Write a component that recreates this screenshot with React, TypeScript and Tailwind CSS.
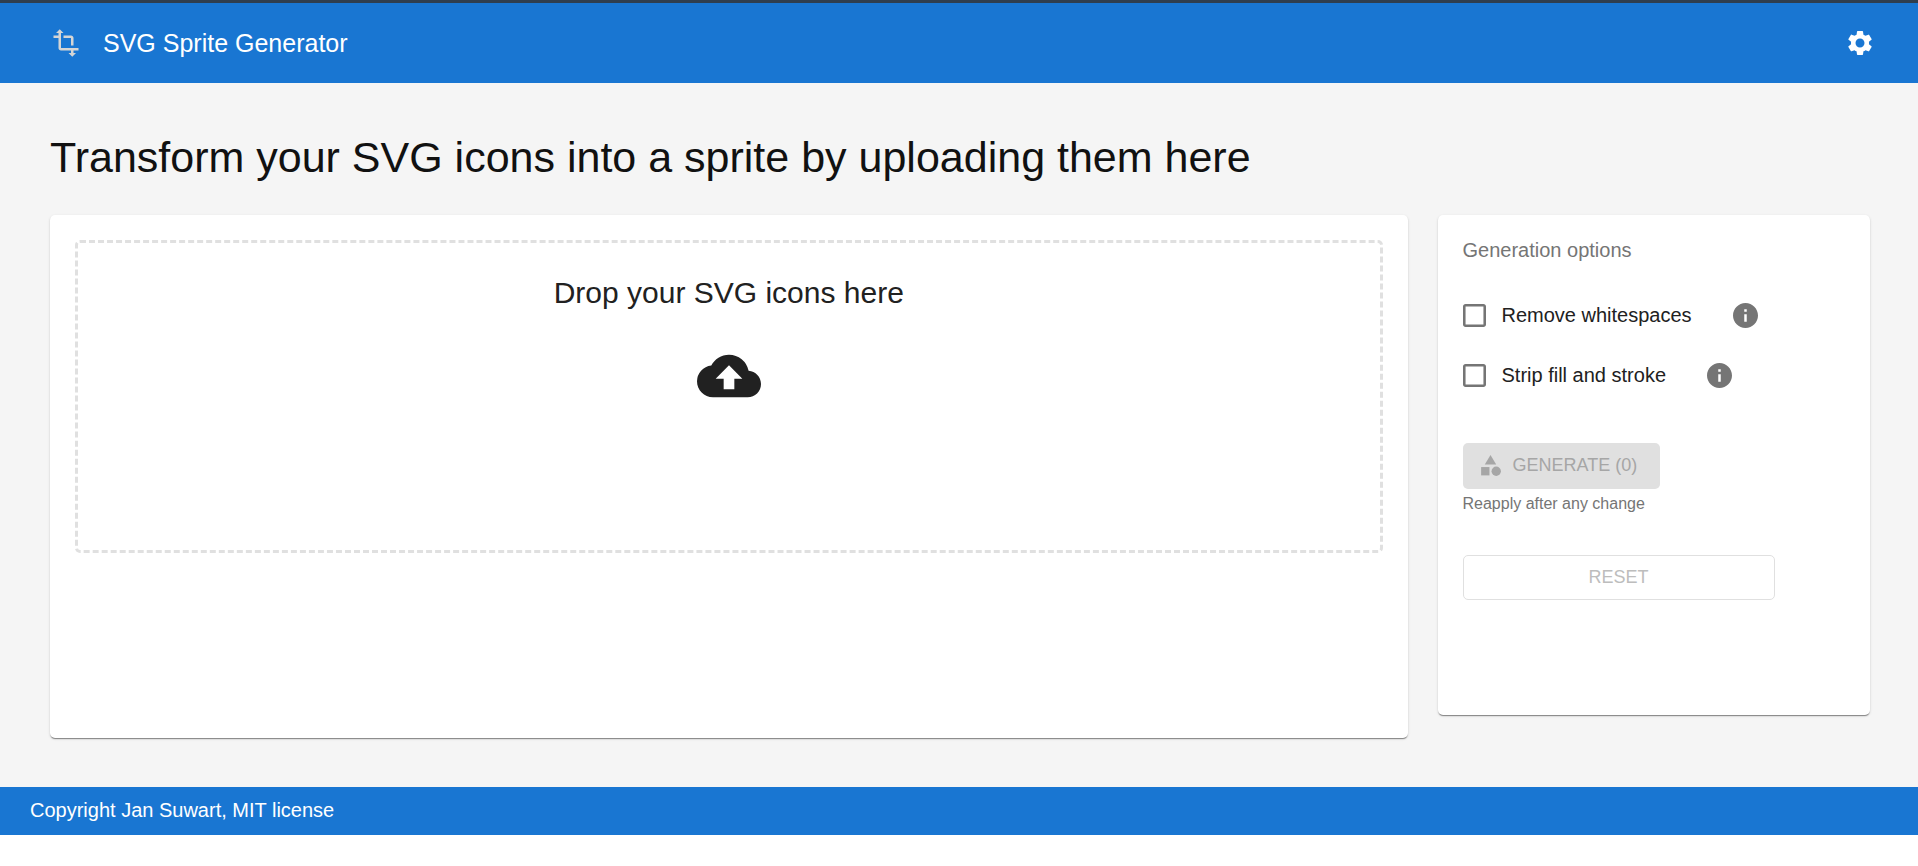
import { useState } from "react";
import { MdBackup, MdCategory, MdSettings, MdTransform } from "react-icons/md";

const cardClass =
  "rounded-[5px] bg-white px-[25px] shadow-[0_2px_1px_-1px_rgba(0,0,0,0.28),0_1px_1px_0_rgba(0,0,0,0.18),0_1px_3px_0_rgba(0,0,0,0.12)]";

function InfoIcon() {
  return (
    <svg viewBox="2 2 20 20" className="size-[25px] fill-[#757575]" aria-hidden="true">
      <path d="M12 2C6.48 2 2 6.48 2 12s4.48 10 10 10 10-4.48 10-10S17.52 2 12 2zm1 15h-2v-6h2v6zm0-8h-2V7h2v2z" />
    </svg>
  );
}

function Option({ id, label, hint }: { id: string; label: string; hint: string }) {
  const [checked, setChecked] = useState(false);
  return (
    <div className="flex h-[60px] items-center">
      <span className="relative size-[23px]">
        <svg viewBox="3 3 18 18" className="size-full fill-[#757575]" aria-hidden="true">
          {checked ? (
            <path d="M19 3H5c-1.11 0-2 .9-2 2v14c0 1.1.89 2 2 2h14c1.11 0 2-.9 2-2V5c0-1.1-.89-2-2-2zm-9 14l-5-5 1.41-1.41L10 14.17l7.59-7.59L19 8l-9 9z" />
          ) : (
            <path d="M19 5v14H5V5h14m0-2H5c-1.1 0-2 .9-2 2v14c0 1.1.9 2 2 2h14c1.1 0 2-.9 2-2V5c0-1.1-.9-2-2-2z" />
          )}
        </svg>
        <input
          id={id}
          type="checkbox"
          checked={checked}
          onChange={(e) => setChecked(e.target.checked)}
          className="absolute inset-0 size-full cursor-pointer appearance-none"
        />
      </span>
      <label htmlFor={id} className="ml-4 cursor-pointer text-xl leading-[30px]">
        {label}
      </label>
      <button type="button" aria-label={hint} className="ml-[41px]">
        <InfoIcon />
      </button>
    </div>
  );
}

export default function App() {
  return (
    <div className="bg-white font-['Liberation_Sans',Arial,sans-serif] text-[#212121]">
      <header className="flex h-[83px] items-center justify-between border-t-[3px] border-[#2f3e4e] bg-[#1976d2] pr-[43px] pl-[51px] text-white">
        <div className="flex items-center gap-[22px]">
          <MdTransform className="size-[30px] text-[#d5d5d5]" aria-hidden="true" />
          <h1 className="text-[25px] leading-10">SVG Sprite Generator</h1>
        </div>
        <button type="button" aria-label="Settings">
          <MdSettings className="size-[30px]" />
        </button>
      </header>

      <main className="bg-[#f5f5f5] pt-12 pr-12 pb-[49px] pl-[50px]">
        <h2 className="text-[43px] leading-[52px] text-[#111111]">
          Transform your SVG icons into a sprite by uploading them here
        </h2>

        <div className="mt-8 grid grid-cols-12 items-start gap-[30px]">
          <section className={`${cardClass} col-span-9 min-h-[523px] py-[25px]`}>
            <label className="flex min-h-[313px] cursor-pointer flex-col items-center rounded-[5px] border-[3px] border-dashed border-[#e0e0e0] pt-[30px]">
              <span className="text-3xl leading-10">Drop your SVG icons here</span>
              <MdBackup className="mt-[31px] size-16" aria-hidden="true" />
              <input type="file" accept=".svg" multiple className="sr-only" />
            </label>
          </section>

          <aside className={`${cardClass} col-span-3 min-h-[500px] py-5`}>
            <h3 className="text-xl leading-[30px] text-[#757575]">Generation options</h3>
            <div className="mt-5">
              <Option id="whitespace" label="Remove whitespaces" hint="About removing whitespaces" />
              <Option id="strip" label="Strip fill and stroke" hint="About stripping fill and stroke" />
            </div>
            <button
              type="button"
              disabled
              className="mt-[38px] flex h-[46px] items-center gap-2.5 rounded-[5px] bg-[#e0e0e0] pr-[23px] pb-0.5 pl-[15px] text-lg text-[#a6a6a6]"
            >
              <MdCategory className="size-[25px]" aria-hidden="true" />
              GENERATE (0)
            </button>
            <p className="mt-0.5 text-base leading-[25px] text-[#757575]">Reapply after any change</p>
            <button
              type="button"
              disabled
              className="mt-[39px] h-[45px] w-full max-w-[312px] rounded-[5px] border border-[#e0e0e0] pb-0.5 text-lg text-[#bdbdbd]"
            >
              RESET
            </button>
          </aside>
        </div>
      </main>

      <footer className="flex h-12 items-center bg-[#1976d2] px-[30px] pb-0.5 text-xl text-white">
        Copyright Jan Suwart, MIT license
      </footer>
    </div>
  );
}
